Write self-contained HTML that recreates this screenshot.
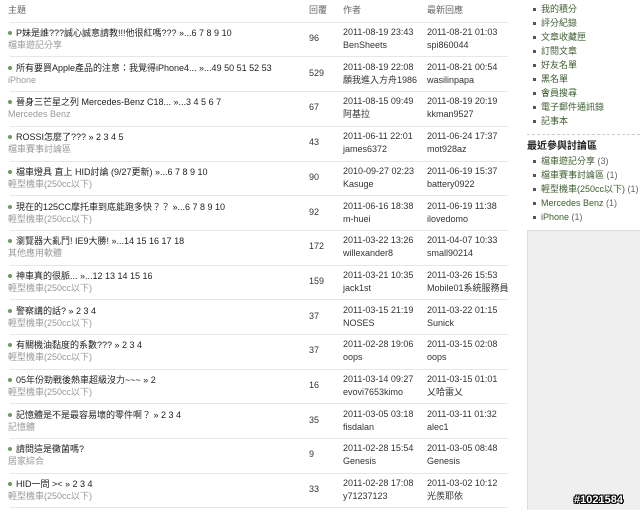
<!DOCTYPE html>
<html><head><meta charset="utf-8"><style>
*{margin:0;padding:0;box-sizing:border-box}
body{width:640px;height:510px;overflow:hidden;background:#fff;font-family:"Liberation Sans","Noto Sans CJK TC",sans-serif;font-size:9px;color:#333;position:relative}
.r{position:absolute;left:0;width:508px;height:35px}
.t{position:absolute;left:16px;top:5px;line-height:12px;white-space:nowrap;color:#222}
.t:before{content:"";position:absolute;left:-8px;top:4px;width:4px;height:4px;border-radius:50%;background:#6f9a60}
.c{position:absolute;left:8px;top:17px;line-height:12px;color:#999;white-space:nowrap}
.n{position:absolute;left:309px;top:10px;line-height:12px}
.a{position:absolute;left:343px;top:4px;line-height:13px;white-space:nowrap}
.l{position:absolute;left:427px;top:4px;line-height:13px;white-space:nowrap}
.h{position:absolute;top:4px;color:#666;line-height:12px}
.ln{position:absolute;left:10px;width:498px;border-top:1px solid #e6e6e6}
ul{list-style:none;position:absolute;left:533px}
li{line-height:14px;color:#3c5e2e;white-space:nowrap;position:relative;padding-left:8px}
li:before{content:"";position:absolute;left:0;top:6px;width:3px;height:3px;background:#555}
li span{color:#666}
</style></head><body>
<div class="h" style="left:8px">主題</div>
<div class="h" style="left:309px">回覆</div>
<div class="h" style="left:343px">作者</div>
<div class="h" style="left:427px">最新回應</div>

<div style="position:absolute;top:22px;left:0;width:508px;height:500px">
<div class="r" style="top:0"><div class="t">P妹是誰???誠心誠意請教!!!他很紅嗎??? »...6 7 8 9 10</div><div class="c">檔車遊記分享</div><div class="n">96</div><div class="a">2011-08-19 23:43<br>BenSheets</div><div class="l">2011-08-21 01:03<br>spi860044</div></div>
<div class="r" style="top:34.7px"><div class="t">所有要買Apple產品的注意：我覺得iPhone4... »...49 50 51 52 53</div><div class="c">iPhone</div><div class="n">529</div><div class="a">2011-08-19 22:08<br>願我進入方舟1986</div><div class="l">2011-08-21 00:54<br>wasilinpapa</div></div>
<div class="r" style="top:69.4px"><div class="t">晉身三芒星之列 Mercedes-Benz C18... »...3 4 5 6 7</div><div class="c">Mercedes Benz</div><div class="n">67</div><div class="a">2011-08-15 09:49<br>阿基拉</div><div class="l">2011-08-19 20:19<br>kkman9527</div></div>
<div class="r" style="top:104.1px"><div class="t">ROSSI怎麼了??? » 2 3 4 5</div><div class="c">檔車賽事討論區</div><div class="n">43</div><div class="a">2011-06-11 22:01<br>james6372</div><div class="l">2011-06-24 17:37<br>mot928az</div></div>
<div class="r" style="top:138.8px"><div class="t">檔車燈具 直上 HID討論 (9/27更新) »...6 7 8 9 10</div><div class="c">輕型機車(250cc以下)</div><div class="n">90</div><div class="a">2010-09-27 02:23<br>Kasuge</div><div class="l">2011-06-19 15:37<br>battery0922</div></div>
<div class="r" style="top:173.5px"><div class="t">現在的125CC摩托車到底能跑多快？？ »...6 7 8 9 10</div><div class="c">輕型機車(250cc以下)</div><div class="n">92</div><div class="a">2011-06-16 18:38<br>m-huei</div><div class="l">2011-06-19 11:38<br>ilovedomo</div></div>
<div class="r" style="top:208.2px"><div class="t">瀏覽器大亂鬥! IE9大勝! »...14 15 16 17 18</div><div class="c">其他應用軟體</div><div class="n">172</div><div class="a">2011-03-22 13:26<br>willexander8</div><div class="l">2011-04-07 10:33<br>small90214</div></div>
<div class="r" style="top:242.9px"><div class="t">神車真的很脈... »...12 13 14 15 16</div><div class="c">輕型機車(250cc以下)</div><div class="n">159</div><div class="a">2011-03-21 10:35<br>jack1st</div><div class="l">2011-03-26 15:53<br>Mobile01系統服務員</div></div>
<div class="r" style="top:277.6px"><div class="t">警察講的話? » 2 3 4</div><div class="c">輕型機車(250cc以下)</div><div class="n">37</div><div class="a">2011-03-15 21:19<br>NOSES</div><div class="l">2011-03-22 01:15<br>Sunick</div></div>
<div class="r" style="top:312.3px"><div class="t">有關機油黏度的系數??? » 2 3 4</div><div class="c">輕型機車(250cc以下)</div><div class="n">37</div><div class="a">2011-02-28 19:06<br>oops</div><div class="l">2011-03-15 02:08<br>oops</div></div>
<div class="r" style="top:347px"><div class="t">05年份勁戰後熱車超級沒力~~~ » 2</div><div class="c">輕型機車(250cc以下)</div><div class="n">16</div><div class="a">2011-03-14 09:27<br>evovi7653kimo</div><div class="l">2011-03-15 01:01<br>乂哈雷乂</div></div>
<div class="r" style="top:381.7px"><div class="t">記憶體是不是最容易壞的零件啊？ » 2 3 4</div><div class="c">記憶體</div><div class="n">35</div><div class="a">2011-03-05 03:18<br>fisdalan</div><div class="l">2011-03-11 01:32<br>alec1</div></div>
<div class="r" style="top:416.4px"><div class="t">請問這是黴菌嗎?</div><div class="c">居家綜合</div><div class="n">9</div><div class="a">2011-02-28 15:54<br>Genesis</div><div class="l">2011-03-05 08:48<br>Genesis</div></div>
<div class="r" style="top:451.1px"><div class="t">HID一問 &gt;&lt; » 2 3 4</div><div class="c">輕型機車(250cc以下)</div><div class="n">33</div><div class="a">2011-02-28 17:08<br>y71237123</div><div class="l">2011-03-02 10:12<br>光羨耶依</div></div>
</div>
<div class="ln" style="top:22px"></div>
<div class="ln" style="top:56px"></div>
<div class="ln" style="top:91px"></div>
<div class="ln" style="top:126px"></div>
<div class="ln" style="top:161px"></div>
<div class="ln" style="top:195px"></div>
<div class="ln" style="top:230px"></div>
<div class="ln" style="top:265px"></div>
<div class="ln" style="top:299px"></div>
<div class="ln" style="top:334px"></div>
<div class="ln" style="top:369px"></div>
<div class="ln" style="top:403px"></div>
<div class="ln" style="top:438px"></div>
<div class="ln" style="top:473px"></div>
<div class="ln" style="top:507px"></div>

<ul style="top:2px"><li>我的積分</li><li>評分紀錄</li><li>文章收藏匣</li><li>訂閱文章</li><li>好友名單</li><li>黑名單</li><li>會員搜尋</li><li>電子郵件通訊錄</li><li>記事本</li></ul>
<div style="position:absolute;left:527px;top:134px;width:113px;border-top:1px dashed #ccc"></div>
<div style="position:absolute;left:527px;top:141px;font-weight:bold;font-size:10px;color:#222;line-height:12px">最近參與討論區</div>
<ul style="top:154px"><li>檔車遊記分享 <span>(3)</span></li><li>檔車賽事討論區 <span>(1)</span></li><li>輕型機車(250cc以下) <span>(1)</span></li><li>Mercedes Benz <span>(1)</span></li><li>iPhone <span>(1)</span></li></ul>
<div style="position:absolute;left:527px;top:230px;width:113px;height:280px;background:#efefef;border-top:1px solid #ddd;border-left:1px solid #ddd"></div>
<div style="position:absolute;left:574px;top:494px;font-size:11px;font-weight:bold;color:#fff;text-shadow:1px 0 #000,-1px 0 #000,0 1px #000,0 -1px #000,1px 1px #000,-1px -1px #000,1px -1px #000,-1px 1px #000">#1021584</div>
</body></html>
